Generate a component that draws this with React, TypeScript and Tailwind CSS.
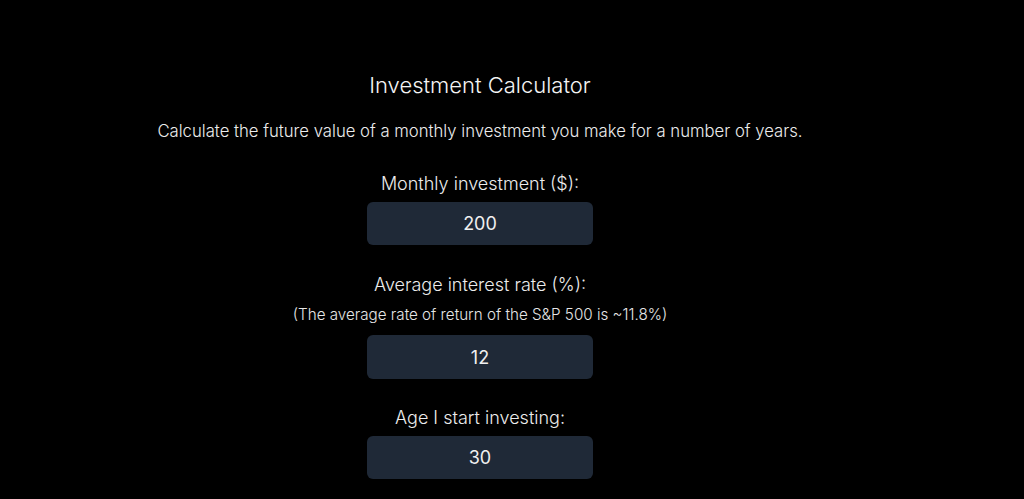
import React from "react";

function Field({ label, note, value }: { label: string; note?: string; value: string }) {
  return (
    <div className="flex flex-col items-center">
      <label className="text-[18px] leading-[24px] font-light text-[#ececec]">{label}</label>
      {note ? (
        <p className="mt-[8px] text-[15.2px] leading-[20px] font-light text-[#e6e6e6]">{note}</p>
      ) : null}
      <input
        readOnly
        value={value}
        className={`${note ? "mt-[10px] h-[44px]" : "mt-[6px] h-[43px]"} w-[226px] rounded-[6px] bg-[#1f2937] text-center text-[18px] text-[#f0f0f0] outline-none`}
        style={{ fontFamily: "Inter, 'Noto Sans', sans-serif" }}
      />
    </div>
  );
}

export default function App() {
  return (
    <div className="min-h-screen bg-black" style={{ fontFamily: "Inter, 'Noto Sans', sans-serif" }}>
      <div className="w-[960px] flex flex-col items-center pt-[70px]">
        <h1 className="text-[22px] leading-[30px] font-light text-[#f4f4f4]">Investment Calculator</h1>
        <p className="mt-[19px] text-[16.7px] leading-[24px] font-light text-[#ececec]">
          Calculate the future value of a monthly investment you make for a number of years.
        </p>
        <div className="mt-[29px]">
          <Field label="Monthly investment ($):" value="200" />
        </div>
        <div className="mt-[28px]">
          <Field
            label="Average interest rate (%):"
            note="(The average rate of return of the S&P 500 is ~11.8%)"
            value="12"
          />
        </div>
        <div className="mt-[27px]">
          <Field label="Age I start investing:" value="30" />
        </div>
      </div>
    </div>
  );
}
